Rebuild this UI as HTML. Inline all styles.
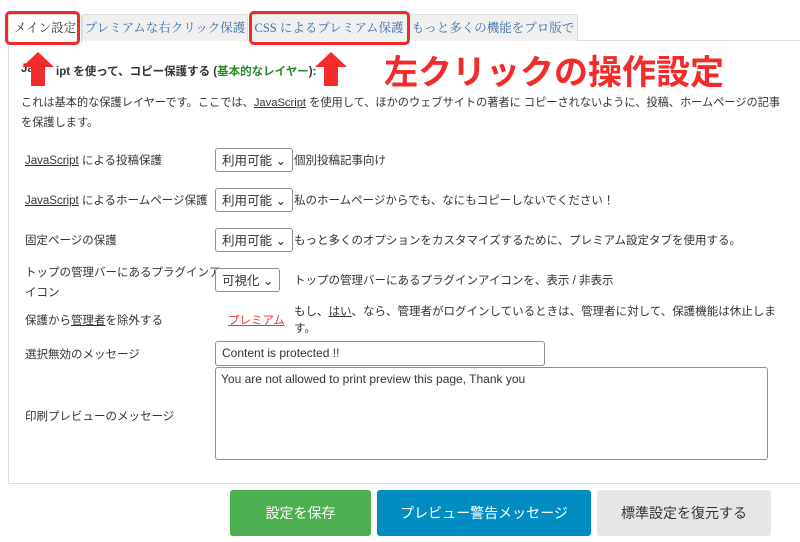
<!DOCTYPE html><html><head><meta charset="utf-8"><style>
body{margin:0;width:800px;height:542px;background:#fff;font-family:"Liberation Sans","Noto Sans CJK JP",sans-serif;position:relative;overflow:hidden;color:#333}
.a{position:absolute;white-space:nowrap}
.tab{position:absolute;top:14px;height:26px;background:#f0f0f1;border:1px solid #ddd;border-bottom:none;font-size:12.5px;color:#3a6ea5;line-height:26px;text-align:center;border-radius:3px 3px 0 0;font-family:"Liberation Serif","Noto Serif CJK SC",serif}
.red{position:absolute;border:3px solid #ee2a2a;border-radius:5px}
.panel{position:absolute;left:8px;top:40px;width:800px;height:442px;border:1px solid #ddd;background:#fff}
.lab{position:absolute;left:25px;font-size:11.5px;color:#333;white-space:nowrap}
.sel{position:absolute;left:215px;height:24px;border:1px solid #8c8f94;border-radius:3px;font-size:12.5px;line-height:24px;padding-left:6px;box-sizing:border-box;background:#fff}
.desc{position:absolute;font-size:11.5px;color:#333;white-space:nowrap}
.btn{position:absolute;top:490px;height:46px;color:#fff;font-size:14px;line-height:46px;text-align:center;border-radius:3px}
u{text-decoration:underline}
</style></head><body>
<div class="panel"></div>
<div class="tab" style="left:8px;width:72px;background:#fff;color:#333;height:28px">メイン設定</div>
<div class="tab" style="left:82px;width:164px">プレミアムな右クリック保護</div>
<div class="tab" style="left:250px;width:156px">CSS によるプレミアム保護</div>
<div class="tab" style="left:408px;width:168px">もっと多くの機能をプロ版で</div>
<div class="red" style="left:5px;top:11px;width:69px;height:28px"></div>
<div class="red" style="left:249px;top:11px;width:155px;height:28px"></div>
<div class="a" style="left:21px;top:63px;font-size:11.5px;font-weight:bold;color:#333">Ja</div>
<div class="a" style="left:56px;top:63px;font-size:11.5px;font-weight:bold;color:#333">ipt を使って、コピー保護する (<span style="color:#2a8a2a">基本的なレイヤー</span>):</div>
<svg class="a" style="left:22px;top:52px" width="32" height="34"><polygon points="16,0 32,15 23,15 23,34 9,34 9,15 0,15" fill="#f32b2b"/></svg>
<svg class="a" style="left:315px;top:52px" width="32" height="34"><polygon points="16,0 32,15 23,15 23,34 9,34 9,15 0,15" fill="#f32b2b"/></svg>
<div class="a" style="left:384px;top:45px;font-size:34px;font-weight:bold;color:#f32b2b">左クリックの操作設定</div>
<div class="a" style="left:21px;top:93px;font-size:11.2px;line-height:20px">これは基本的な保護レイヤーです。ここでは、<u>JavaScript</u> を使用して、ほかのウェブサイトの著者に コピーされないように、投稿、ホームページの記事<br>を保護します。</div>
<div class="lab" style="top:152px"><u>JavaScript</u> による投稿保護</div>
<div class="sel" style="top:148px;width:78px">利用可能 ⌄</div><div class="desc" style="left:294px;top:152px">個別投稿記事向け</div>
<div class="lab" style="top:192px"><u>JavaScript</u> によるホームページ保護</div>
<div class="sel" style="top:188px;width:78px">利用可能 ⌄</div><div class="desc" style="left:294px;top:192px">私のホームページからでも、なにもコピーしないでください！</div>
<div class="lab" style="top:232px">固定ページの保護</div>
<div class="sel" style="top:228px;width:78px">利用可能 ⌄</div><div class="desc" style="left:294px;top:232px">もっと多くのオプションをカスタマイズするために、プレミアム設定タブを使用する。</div>
<div class="lab" style="top:263px;line-height:20px">トップの管理バーにあるプラグインア<br>イコン</div>
<div class="sel" style="top:268px;width:65px">可視化 ⌄</div><div class="desc" style="left:294px;top:272px">トップの管理バーにあるプラグインアイコンを、表示 / 非表示</div>
<div class="lab" style="top:312px">保護から<u>管理者</u>を除外する</div>
<div class="a" style="left:228px;top:312px;font-size:11.5px;color:#e33"><u>プレミアム</u></div>
<div class="desc" style="left:294px;top:304px;line-height:17px">もし、<u>はい</u>、なら、管理者がログインしているときは、管理者に対して、保護機能は休止しま<br>す。</div>
<div class="lab" style="top:346px">選択無効のメッセージ</div>
<div class="a" style="left:215px;top:341px;width:330px;height:25px;border:1px solid #8c8f94;border-radius:3px;box-sizing:border-box;font-size:12px;line-height:23px;padding-left:6px">Content is protected !!</div>
<div class="lab" style="top:408px">印刷プレビューのメッセージ</div>
<div class="a" style="left:215px;top:367px;width:553px;height:93px;border:1px solid #8c8f94;border-radius:3px;box-sizing:border-box;font-size:12px;padding:4px 5px">You are not allowed to print preview this page, Thank you</div>
<div class="btn" style="left:230px;width:141px;background:#4caf50">設定を保存</div>
<div class="btn" style="left:377px;width:214px;background:#008ec2">プレビュー警告メッセージ</div>
<div class="btn" style="left:597px;width:174px;background:#e6e6e6;color:#333">標準設定を復元する</div>
</body></html>
